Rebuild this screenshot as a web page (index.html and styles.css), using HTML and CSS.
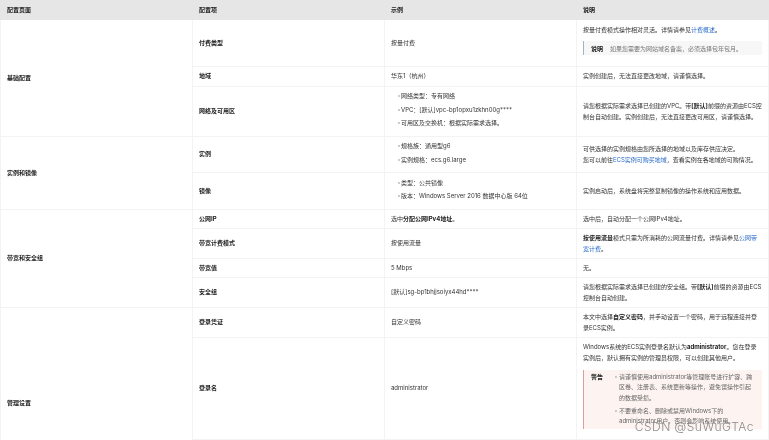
FILE: index.html
```html
<!DOCTYPE html>
<html lang="zh-CN">
<head>
<meta charset="utf-8">
<title>配置说明</title>
<link rel="stylesheet" href="styles.css">
</head>
<body>
<table class="config">
<colgroup><col class="c1"><col class="c2"><col class="c3"><col class="c4"></colgroup>
<thead><tr class="h19"><th>配置页面</th><th>配置项</th><th>示例</th><th>说明</th></tr></thead>
<tbody>
<tr class="h47"><td rowspan="3" class="strong">基础配置</td><td class="strong">付费类型</td><td>按量付费</td>
<td><p>按量付费模式操作相对灵活。详情请参见<a>计费概述</a>。</p>
<div class="note"><b>说明</b><span>如果您需要为网站域名备案，必须选择包年包月。</span></div></td></tr>
<tr class="h20"><td class="strong">地域</td><td>华东1（杭州）</td><td>实例创建后，无法直接更改地域，请谨慎选择。</td></tr>
<tr class="h50"><td class="strong">网络及可用区</td>
<td><ul><li>网络类型：专有网络</li><li>VPC：[默认]vpc-bp1opxu1zkhn00g****</li><li>可用区及交换机：根据实际需求选择。</li></ul></td>
<td>请您根据实际需求选择已创建的VPC。带<b>[默认]</b>前缀的资源由ECS控制台自动创建。实例创建后，无法直接更改可用区，请谨慎选择。</td></tr>
<tr class="h36"><td rowspan="2" class="strong">实例和镜像</td><td class="strong">实例</td>
<td><ul><li>规格族：通用型g6</li><li>实例规格：ecs.g6.large</li></ul></td>
<td>可供选择的实例规格由您所选择的地域以及库存供应决定。<br>您可以前往<a>ECS实例可购买地域</a>，查看实例在各地域的可购情况。</td></tr>
<tr class="h37"><td class="strong">镜像</td>
<td><ul><li>类型：公共镜像</li><li>版本：Windows Server 2016 数据中心版 64位</li></ul></td>
<td>实例启动后，系统盘将完整复制镜像的操作系统和应用数据。</td></tr>
<tr class="h19"><td rowspan="4" class="strong">带宽和安全组</td><td class="strong">公网IP</td><td>选中<b>分配公网IPv4地址</b>。</td><td>选中后，自动分配一个公网IPv4地址。</td></tr>
<tr class="h30"><td class="strong">带宽计费模式</td><td>按使用流量</td><td><b>按使用流量</b>模式只需为所消耗的公网流量付费。详情请参见<a>公网带宽计费</a>。</td></tr>
<tr class="h19"><td class="strong">带宽值</td><td>5 Mbps</td><td>无。</td></tr>
<tr class="h30"><td class="strong">安全组</td><td>[默认]sg-bp1bhjjsoiyx44hd****</td><td>请您根据实际需求选择已创建的安全组。带<b>[默认]</b>前缀的资源由ECS控制台自动创建。</td></tr>
<tr class="h30"><td rowspan="3" class="strong">管理设置</td><td class="strong">登录凭证</td><td>自定义密码</td><td>本文中选择<b>自定义密码</b>，并手动设置一个密码，用于远程连接并登录ECS实例。</td></tr>
<tr class="h102"><td class="strong">登录名</td><td>administrator</td>
<td><p>Windows系统的ECS实例登录名默认为<b>administrator</b>。您在登录实例后，默认拥有实例的管理员权限，可以创建其他用户。</p>
<div class="warn"><b>警告</b><ul><li>请谨慎使用administrator等管理账号进行扩容、跨区卷、注册表、系统更新等操作，避免误操作引起的数据受损。</li><li>不要重命名、删除或禁用Windows下的administrator用户，否则会影响系统使用。</li></ul></div></td></tr>
<tr class="h60"><td></td><td></td><td></td></tr>
</tbody>
</table>
<div class="mark">CSDN @SuWuGTAc</div>
</body>
</html>
```
FILE: styles.css
```css
html, body { margin: 0; padding: 0; background: #fff; }
body { width: 769px; height: 440px; overflow: hidden; position: relative; font-family: Inter, "Noto Sans CJK SC", sans-serif; font-size: 6px; line-height: 11px; color: #333; }
.config { width: 769px; table-layout: fixed; border-collapse: collapse; filter: blur(0.25px); }
.c1, .c2, .c3, .c4 { width: 25%; }
th, td { border: 1px solid #f3f3f3; padding: 0 6px 2px; text-align: left; vertical-align: middle; font-weight: 400; overflow: hidden; }
th { background: #e6e6e6; border-color: #e6e6e6; color: #222; font-weight: 700; }
.strong { color: #222; font-weight: 700; }
b { font-weight: 700; color: #222; }
a { color: #2a6bc9; }
p { margin: 0; }
.h19 { height: 19px; }
.h20 { height: 20px; }
.h30 { height: 30px; }
.h36 { height: 36px; }
.h37 { height: 37px; }
.h47 { height: 47px; }
.h50 { height: 50px; }
.h60 { height: 60px; }
.h102 { height: 102px; }
ul { margin: 0; padding: 0 0 0 10px; list-style: none; }
li { position: relative; margin: 0 0 2.5px; }
li::before { content: ""; position: absolute; left: -3.5px; top: 5px; width: 2px; height: 2px; border-radius: 50%; background: #bbb; }
.note { display: flex; gap: 7px; margin: 6.5px 0 5.5px; padding: 1.5px 7px; background: #f7f7f7; border-left: 1px solid #9db6cc; color: #777; }
.warn { display: flex; gap: 8px; height: 59px; margin: 6.5px 0 5px; padding: 2px 7px; box-sizing: border-box; background: #fdf4f1; border-left: 1px solid #dfa093; color: #666; line-height: 10.5px; overflow: hidden; }
.warn b { flex: none; }
.warn ul { padding-left: 8px; }
.warn li::before { top: 4px; left: -4px; }
.mark { position: absolute; right: 15px; bottom: 7px; font-size: 12px; font-weight: 300; line-height: 13px; letter-spacing: 0.5px; color: #777; opacity: .85; }
```
